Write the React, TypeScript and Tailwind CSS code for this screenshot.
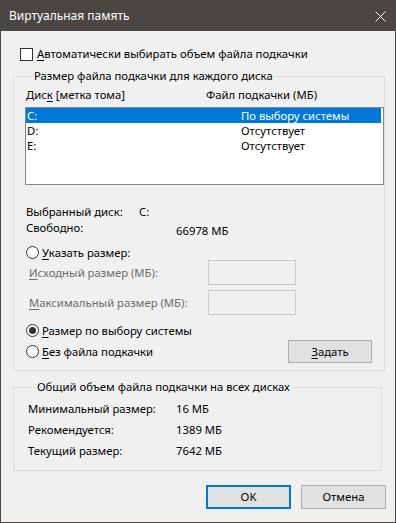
import React from "react";

const U = ({ children }: { children: React.ReactNode }) => <span className="underline underline-offset-[2px]">{children}</span>;

const Radio = ({ checked, label }: { checked?: boolean; label: React.ReactNode }) => (
  <div className="flex items-center h-[15px] pl-[1px]">
    <span className="w-[13px] h-[13px] rounded-full border border-[#333333] bg-white flex items-center justify-center">
      {checked && <span className="w-[7px] h-[7px] rounded-full bg-[#333333]" />}
    </span>
    <span className="ml-[3px]">{label}</span>
  </div>
);

const Btn = ({ children, primary }: { children: React.ReactNode; primary?: boolean }) => (
  <button
    className={
      "h-[24px] w-[85px] bg-[#e1e1e1] flex items-center justify-center " +
      (primary ? "border-2 border-[#0078d7]" : "border border-[#adadad]")
    }
  >
    {children}
  </button>
);

const drives = [
  { d: "C:", f: "По выбору системы" },
  { d: "D:", f: "Отсутствует" },
  { d: "E:", f: "Отсутствует" },
];

export default function App() {
  return (
    <div
      className="w-[396px] h-[523px] flex flex-col bg-[#f0f0f0] border border-[#4a4642] text-[11.3px] leading-[16px] text-black"
      style={{ fontFamily: '"Noto Sans", "Open Sans", sans-serif' }}
    >
      {/* title bar */}
      <div className="h-[30px] bg-[#4a4642] flex items-center justify-between pl-[8px] pr-[9px] text-white text-[12px]">
        <span>Виртуальная память</span>
        <svg width="11" height="11" viewBox="0 0 11 11">
          <path d="M0.5 0.5 L10.5 10.5 M10.5 0.5 L0.5 10.5" stroke="#ffffff" strokeWidth="1" />
        </svg>
      </div>

      <div className="flex flex-col pl-[12px]">
        <div className="flex items-center h-[16px] mt-[15px] pl-[7px]">
          <span className="w-[13px] h-[13px] border border-[#333333] bg-white" />
          <span className="ml-[4px]">
            <U>А</U>втоматически выбирать объем файла подкачки
          </span>
        </div>

        <fieldset className="mt-[6px] w-[369px] border border-[#dcdcdc] pl-[11px] pb-[7px]">
          <legend className="ml-[8px] px-[1px]">Размер файла подкачки для каждого диска</legend>
          <div className="flex h-[16px] mt-[3px] pl-[1px]">
            <span className="w-[180px]">
              Дис<U>к</U> [метка тома]
            </span>
            <span>Файл подкачки (МБ)</span>
          </div>
          <div className="mt-[4px] w-[359px] h-[78px] bg-white border border-[#828790] flex flex-col">
            {drives.map((r, i) => (
              <div
                key={r.d}
                className={
                  "flex items-center h-[15px] leading-[15px] pl-[1px] " +
                  (i === 0 ? "bg-[#0078d7] text-white mr-[2px]" : "")
                }
              >
                <span className="w-[214px]">{r.d}</span>
                <span>{r.f}</span>
              </div>
            ))}
          </div>

          <div className="flex h-[16px] mt-[19px] pl-[1px]">
            <span className="w-[113px]">Выбранный диск:</span>
            <span>C:</span>
          </div>
          <div className="flex items-start pl-[1px]">
            <span className="w-[150px]">Свободно:</span>
            <span className="mt-[3px]">66978 МБ</span>
          </div>

          <div className="mt-[6px]">
            <Radio label={<><U>У</U>казать размер:</>} />
          </div>
          <div className="flex items-center h-[25px] text-[#6d6d6d]">
            <span className="w-[183px] pl-[4px]">
              <U>И</U>сходный размер (МБ):
            </span>
            <span className="w-[88px] h-[25px] border border-[#cccccc] bg-[#f0f0f0]" />
          </div>
          <div className="flex items-center h-[25px] mt-[5px] text-[#6d6d6d]">
            <span className="w-[183px] pl-[4px]">
              <U>М</U>аксимальный размер (МБ):
            </span>
            <span className="w-[88px] h-[25px] border border-[#cccccc] bg-[#f0f0f0]" />
          </div>

          <div className="mt-[8px]">
            <Radio checked label={<><U>Р</U>азмер по выбору системы</>} />
          </div>
          <div className="flex items-center h-[23px] mt-[2px]">
            <div className="w-[263px]">
              <Radio label={<><U>Б</U>ез файла подкачки</>} />
            </div>
            <button className="w-[84px] h-[23px] bg-[#e1e1e1] border border-[#adadad] flex items-center justify-center">
              <span>
                <U>З</U>адать
              </span>
            </button>
          </div>
        </fieldset>

        <fieldset className="mt-[8px] w-[369px] border border-[#dcdcdc] pl-[14px] pb-[11px]">
          <legend className="ml-[8px] px-[1px]">Общий объем файла подкачки на всех дисках</legend>
          <div className="flex flex-col gap-[5px] mt-[6px]">
            {[
              ["Минимальный размер:", "16 МБ"],
              ["Рекомендуется:", "1389 МБ"],
              ["Текущий размер:", "7642 МБ"],
            ].map(([k, v]) => (
              <div key={k} className="flex h-[16px]">
                <span className="w-[148px]">{k}</span>
                <span>{v}</span>
              </div>
            ))}
          </div>
        </fieldset>
      </div>

      <div className="flex justify-end gap-[10px] pr-[9px] mt-[14px]">
        <Btn primary>OK</Btn>
        <Btn>Отмена</Btn>
      </div>
    </div>
  );
}
